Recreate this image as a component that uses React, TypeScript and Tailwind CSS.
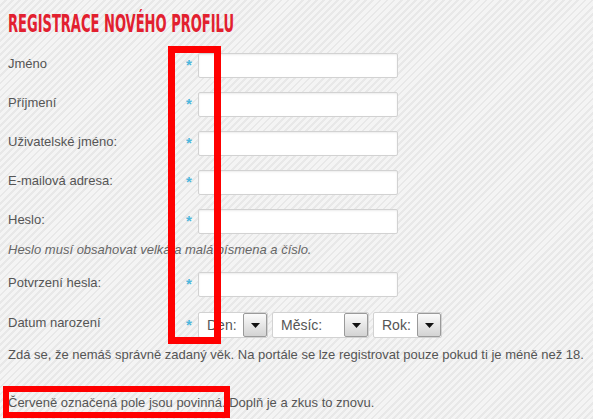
import React from 'react';

const fields = ['Jméno', 'Příjmení', 'Uživatelské jméno:', 'E-mailová adresa:', 'Heslo:'];

const Star = () => (
  <span className="w-[8px] mr-[5px] text-center text-[15px] font-bold text-[#4db6dc]">*</span>
);

const TextInput = () => (
  <input
    type="text"
    className="w-[200px] h-[25px] bg-white border border-[#d2d2d2] rounded-[2px] shadow-[inset_0_1px_2px_rgba(0,0,0,0.08)] outline-none"
  />
);

const FormRow: React.FC<{ label: string; className?: string }> = ({ label, className }) => (
  <div className={`flex items-center ${className ?? ''}`}>
    <span className="w-[177px] pb-[4px]">{label}</span>
    <Star />
    <TextInput />
  </div>
);

const Caret = () => (
  <div className="w-[24px] h-full flex items-center justify-center border border-[#9a9a9a] rounded-[2px] bg-gradient-to-b from-[#fbfbfb] to-[#d3d3d3]">
    <svg width="9" height="5" viewBox="0 0 9 5">
      <path d="M0 0 H9 L4.5 5 Z" fill="#111" />
    </svg>
  </div>
);

const FakeSelect: React.FC<{ label: string; width: string }> = ({ label, width }) => (
  <div className={`${width} h-[26px] flex items-center bg-white border border-[#d2d2d2] rounded-[2px]`}>
    <span className="flex-1 pl-[8px] text-[14px] text-[#555]">{label}</span>
    <Caret />
  </div>
);

export default function App() {
  return (
    <div className="relative w-[593px] h-[419px] overflow-hidden bg-[repeating-linear-gradient(135deg,#f4f4f4_0px,#f4f4f4_3px,#e8e8e8_3px,#e8e8e8_5px)] font-['Liberation_Sans',Arial,sans-serif] text-[13px] text-[#555]">
      <div className="pl-[8px]">
        <div className="h-[40px] pt-[11px]">
          <h1 className="inline-block origin-left scale-x-[0.58] font-['DejaVu_Sans_Condensed',sans-serif] font-bold text-[25px] leading-[25px] text-[#e2202f] whitespace-nowrap">
            REGISTRACE NOVÉHO PROFILU
          </h1>
        </div>

        <div className="pt-[13px]">
          {fields.map((f, i) => (
            <FormRow key={f} label={f} className={i === 0 ? '' : 'mt-[14px]'} />
          ))}
          <p className="mt-[8px] h-[16px] leading-[16px] italic text-[#666]">
            Heslo musí obsahovat velká a malá písmena a číslo.
          </p>
          <FormRow label="Potvrzení hesla:" className="mt-[14px]" />
          <div className="flex items-center mt-[15px]">
            <span className="w-[177px] pb-[4px]">Datum narození</span>
            <Star />
            <div className="flex gap-[4px]">
              <FakeSelect label="Den:" width="w-[70px]" />
              <FakeSelect label="Měsíc:" width="w-[97px]" />
              <FakeSelect label="Rok:" width="w-[69px]" />
            </div>
          </div>
          <p className="mt-[9px] leading-[16px]">
            Zdá se, že nemáš správně zadaný věk. Na portále se lze registrovat pouze pokud ti je méně než 18.
          </p>
          <p className="mt-[32px] leading-[16px]">
            Červeně označená pole jsou povinná. Doplň je a zkus to znovu.
          </p>
        </div>
      </div>

      {/* anotace */}
      <div className="absolute left-[168px] top-[46px] w-[53px] h-[298px] border-[7px] border-[#ff0000]" />
      <div className="absolute left-[3px] top-[386px] w-[227px] h-[32px] border-[6px] border-[#ff0000]" />
    </div>
  );
}
